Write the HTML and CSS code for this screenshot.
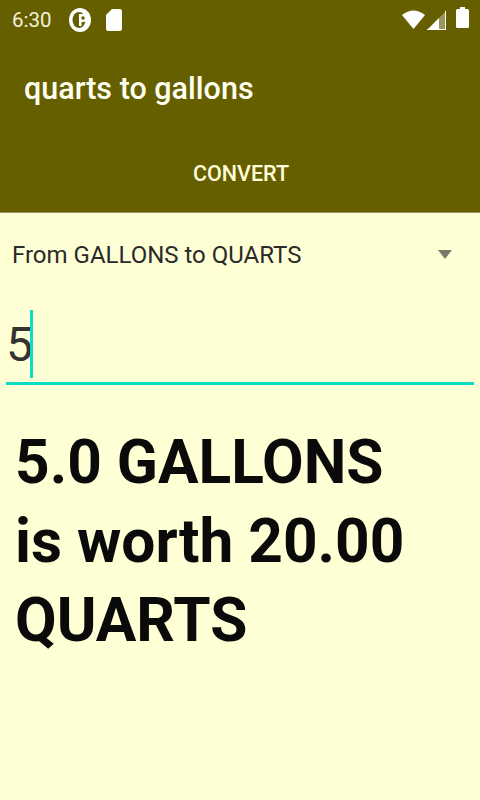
FILE: index.html
```html
<!DOCTYPE html>
<html lang="en">

<head>
    <meta charset="UTF-8">
    <meta name="viewport" content="width=device-width, initial-scale=1.0">
    <title>quarts to gallons</title>
    <link rel="stylesheet" href="styles.css">
</head>

<body>
    <div class="app">
        <div class="status">
            <span class="clock">6:30</span>
            <svg class="ic-p" width="22" height="24" viewBox="0 0 22 24">
                <ellipse cx="11" cy="12" rx="11" ry="12" fill="#fff" />
                <ellipse cx="10" cy="12" rx="6.500" ry="8" fill="#665f00" />
                <path d="M10 6h4a4 4 0 0 1 0 8h-1.500v4H10z" fill="#fff" />
                <circle cx="14" cy="10" r="1.800" fill="#665f00" />
            </svg>
            <svg class="ic-sd" width="16" height="22" viewBox="0 0 16 22">
                <path d="M6 0h8a2 2 0 0 1 2 2v18a2 2 0 0 1-2 2H2a2 2 0 0 1-2-2V6z" fill="#fff" />
            </svg>
            <span class="spacer"></span>
            <svg class="ic-wifi" width="23" height="19" viewBox="0 0 23 19">
                <path d="M0 5Q11.500-4 23 5L11.500 19z" fill="#fff" />
            </svg>
            <svg class="ic-signal" width="19" height="19" viewBox="0 0 19 19">
                <path d="M19 0v19H0z" fill="#fff" fill-opacity=".35" />
                <path d="M12 7v12H0z M19 0v19h-1V0z M0 18h19v1H0z" fill="#fff" />
            </svg>
            <svg class="ic-batt" width="13" height="21" viewBox="0 0 13 21">
                <path d="M4 0h5v2h2.500a1.500 1.500 0 0 1 1.500 1.500V19.500a1.500 1.500 0 0 1-1.500 1.500H1.500A1.500 1.500 0 0 1 0 19.500V3.500A1.500 1.500 0 0 1 1.500 2H4z" fill="#fff" />
            </svg>
        </div>

        <div class="toolbar">quarts to gallons</div>

        <div class="convert">CONVERT</div>

        <div class="spinner">
            <span>From GALLONS to QUARTS</span>
            <span class="arrow"></span>
        </div>

        <div class="field">
            <span class="value">5</span>
            <span class="caret"></span>
        </div>

        <div class="result">5.0 GALLONS is worth 20.00 QUARTS</div>
    </div>
</body>

</html>
```

FILE: styles.css
```css
* {
    margin: 0;
    padding: 0;
    box-sizing: border-box;
}

body {
    width: 480px;
    height: 800px;
    overflow: hidden;
    background-color: #ffffd6;
    font-family: Roboto, "Liberation Sans", sans-serif;
}

.app {
    display: flex;
    flex-direction: column;
    height: 100%;
}

.status {
    height: 40px;
    display: flex;
    align-items: center;
    padding: 0 11px 0 12px;
    background-color: #665f00;
    color: #f4f2dc;
    font-size: 20.500px;
}

.clock {
    margin-right: 17px;
}

.ic-p {
    margin-right: 15px;
}

.spacer {
    flex: 1;
}

.ic-wifi {
    margin-bottom: 2px;
    margin-right: 2px;
}

.ic-signal {
    margin-right: 10px;
}

.ic-batt {
    margin-bottom: 5px;
}

.toolbar {
    height: 94px;
    display: flex;
    align-items: center;
    padding: 4px 24px 0;
    background-color: #665f00;
    border-bottom: 1px solid #615a00;
    color: #fffff0;
    font-size: 30.500px;
    font-weight: 500;
}

.convert {
    height: 79px;
    display: flex;
    align-items: center;
    justify-content: center;
    padding-left: 2px;
    background-color: #665f00;
    border-bottom: 1px solid #98935a;
    color: #fffdd8;
    font-size: 21.500px;
    font-weight: 500;
}

.spinner {
    height: 80px;
    display: flex;
    align-items: center;
    justify-content: space-between;
    padding: 3px 28px 0 12px;
    color: #2a2a2a;
    font-size: 24px;
}

.arrow {
    width: 0;
    height: 0;
    border-left: 7.500px solid transparent;
    border-right: 7.500px solid transparent;
    border-top: 9px solid #7a7a6a;
}

.field {
    height: 75px;
    margin: 17px 6px 0;
    display: flex;
    border-bottom: 3px solid #0cdcc6;
}

.value {
    font-size: 48px;
    line-height: 70px;
    letter-spacing: -3px;
    color: #333;
}

.caret {
    width: 3px;
    height: 68px;
    background-color: #0cdcc6;
}

.result {
    padding: 38px 60px 0 15px;
    color: #0a0a0a;
    font-size: 60.400px;
    line-height: 79px;
    font-weight: 700;
}
```
